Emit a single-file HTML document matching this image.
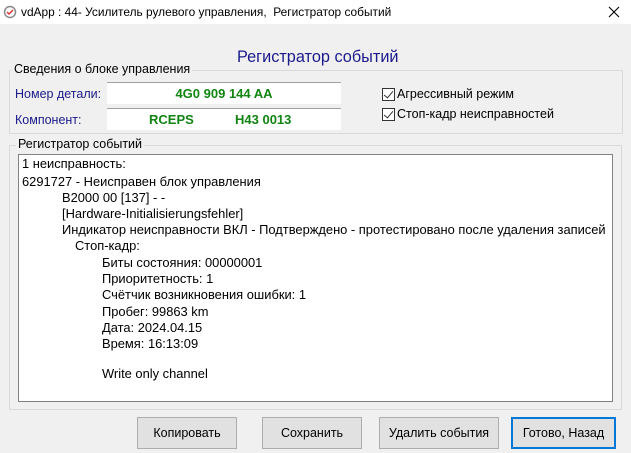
<!DOCTYPE html>
<html><head><meta charset="utf-8"><style>
*{margin:0;padding:0;box-sizing:border-box}
body{width:631px;height:453px;overflow:hidden;background:#f0f0f0;font-family:"Liberation Sans",sans-serif;font-size:12px;color:#000;position:relative}
.a{position:absolute;white-space:nowrap}
.box{position:absolute;border:1px solid #d9d9d9}
.leg{position:absolute;background:#f0f0f0;padding:0 2px;font-size:12.5px}
.fld{position:absolute;background:#fff;border-top:1px solid #a0a0a0;color:#118411;font-weight:bold;font-size:13px;line-height:21px;height:22px}
.btn{position:absolute;top:417px;height:32px;background:#e1e1e1;border:1px solid #adadad;text-align:center;line-height:30px;font-size:12.5px}
.cb{position:absolute;width:13px;height:13px;border:1px solid #333;background:#fff}
.cb:after{content:"";position:absolute;left:3px;top:0px;width:4px;height:8px;border:solid #333;border-width:0 1.5px 1.5px 0;transform:rotate(40deg)}
.t{position:absolute;left:18px;top:154px;width:595px;height:248px;background:#fff;border:1px solid #828282}
.t div{position:absolute;white-space:nowrap;font-size:12.9px}
</style></head><body>
<div class="a" style="left:0;top:0;width:631px;height:24px;background:#fff"></div>
<svg class="a" style="left:3px;top:5px" width="14" height="14" viewBox="0 0 14 14"><circle cx="7" cy="7" r="5.5" fill="none" stroke="#888" stroke-width="1.5"/><path d="M4 7l2 2 4-4" stroke="#d33" stroke-width="1.5" fill="none"/></svg>
<div class="a" style="left:21px;top:5px;font-size:11.9px">vdApp : 44- Усилитель рулевого управления,&nbsp; Регистратор событий</div>
<svg class="a" style="left:608px;top:6px" width="12" height="12" viewBox="0 0 12 12"><path d="M1 1L11 11M11 1L1 11" stroke="#000" stroke-width="1.1"/></svg>
<div class="a" style="left:0;width:631px;text-align:center;top:48px;font-size:16.3px;color:#1a1a8c">&nbsp;Регистратор событий</div>
<div class="box" style="left:9px;top:70px;width:614px;height:64px"></div>
<div class="leg" style="left:12px;top:62px">Сведения о блоке управления</div>
<div class="a" style="left:15px;top:87px;color:#1a1a8c;font-size:12.5px">Номер детали:</div>
<div class="a" style="left:15px;top:113px;color:#1a1a8c;font-size:12.5px">Компонент:</div>
<div class="fld" style="left:107px;top:82px;width:234px;text-align:center">4G0 909 144 AA</div>
<div class="fld" style="left:107px;top:108px;width:234px"><span style="position:absolute;left:42px">RCEPS</span><span style="position:absolute;left:128px">H43 0013</span></div>
<div class="cb" style="left:382px;top:88px"></div>
<div class="a" style="left:397px;top:87px;font-size:12.5px">Агрессивный режим</div>
<div class="cb" style="left:382px;top:108px"></div>
<div class="a" style="left:397px;top:107px;font-size:12.5px">Стоп-кадр неисправностей</div>
<div class="box" style="left:9px;top:145px;width:613px;height:265px"></div>
<div class="leg" style="left:16px;top:137px">Регистратор событий</div>
<div class="t">
<div style="left:3px;top:1px">1 неисправность:</div>
<div style="left:3px;top:19px">6291727 - Неисправен блок управления</div>
<div style="left:43px;top:35px">B2000 00 [137] - -</div>
<div style="left:43px;top:51px">[Hardware-Initialisierungsfehler]</div>
<div style="left:43px;top:67px">Индикатор неисправности ВКЛ - Подтверждено - протестировано после удаления записей</div>
<div style="left:56px;top:83px">Стоп-кадр:</div>
<div style="left:83px;top:100px">Биты состояния: 00000001</div>
<div style="left:83px;top:116px">Приоритетность: 1</div>
<div style="left:83px;top:132px">Счётчик возникновения ошибки: 1</div>
<div style="left:83px;top:149px">Пробег: 99863 km</div>
<div style="left:83px;top:165px">Дата: 2024.04.15</div>
<div style="left:83px;top:181px">Время: 16:13:09</div>
<div style="left:83px;top:211px">Write only channel</div>
</div>
<div class="btn" style="left:137px;width:100px">Копировать</div>
<div class="btn" style="left:262px;width:100px">Сохранить</div>
<div class="btn" style="left:379px;width:120px">Удалить события</div>
<div class="btn" style="left:511px;width:105px;border:2px solid #0078d7;line-height:28px">Готово, Назад</div>
</body></html>
